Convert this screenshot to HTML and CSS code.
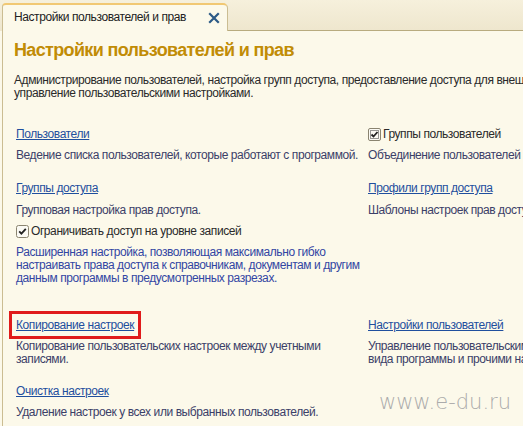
FILE: index.html
```html
<!DOCTYPE html>
<html lang="ru">
<head>
<meta charset="utf-8">
<link rel="stylesheet" href="styles.css">
</head>
<body>
<div class="window">
  <div class="tabbar">
    <div class="tab">
      <span class="tab-title">Настройки пользователей и прав</span>
      <svg class="close" width="12" height="12" viewBox="0 0 12 12"><path d="M2 2 L10 10 M10 2 L2 10" stroke="#2c5a86" stroke-width="2.2" stroke-linecap="square"/></svg>
    </div>
    <div class="tabfill"></div>
  </div>
  <div class="panel">
    <h1 class="title">Настройки пользователей и прав</h1>
    <p class="intro">Администрирование пользователей, настройка групп доступа, предоставление доступа для внешних пользователей,<br>управление пользовательскими настройками.</p>

    <div class="grid">
      <div class="cell r1">
        <a class="link" href="#">Пользователи</a>
        <p class="desc">Ведение списка пользователей, которые работают с программой.</p>
      </div>
      <div class="cell r1">
        <label class="check focus">
          <svg width="13" height="13" viewBox="0 0 13 13"><rect x="0.5" y="0.5" width="12" height="12" rx="1.5" fill="#fbfaf4" stroke="#8a8470"/><rect x="2.5" y="2.5" width="8" height="8" fill="none" stroke="#333" stroke-dasharray="1 1"/><path d="M3.5 6.5 L5.5 8.5 L9.5 4" fill="none" stroke="#222" stroke-width="1.8"/></svg>
          <span>Группы пользователей</span>
        </label>
        <p class="desc">Объединение пользователей в группы для удобства администрирования.</p>
      </div>

      <div class="cell r2">
        <a class="link" href="#">Группы доступа</a>
        <p class="desc">Групповая настройка прав доступа.</p>
        <label class="check">
          <svg width="13" height="13" viewBox="0 0 13 13"><rect x="0.5" y="0.5" width="12" height="12" rx="2" fill="#fbfaf4" stroke="#8a8470"/><path d="M3.2 6.4 L5.4 8.6 L9.8 3.8" fill="none" stroke="#222" stroke-width="1.8"/></svg>
          <span>Ограничивать доступ на уровне записей</span>
        </label>
        <p class="desc blue">Расширенная настройка, позволяющая максимально гибко<br>настраивать права доступа к справочникам, документам и другим<br>данным программы в предусмотренных разрезах.</p>
      </div>
      <div class="cell r2">
        <a class="link" href="#">Профили групп доступа</a>
        <p class="desc">Шаблоны настроек прав доступа для групп пользователей.</p>
      </div>

      <div class="cell r3">
        <a class="link boxed" href="#">Копирование настроек</a>
        <p class="desc">Копирование пользовательских настроек между учетными<br>записями.</p>
      </div>
      <div class="cell r3">
        <a class="link" href="#">Настройки пользователей</a>
        <p class="desc">Управление пользовательскими настройками отчетов, внешнего<br>вида программы и прочими настройками.</p>
      </div>

      <div class="cell r4">
        <a class="link" href="#">Очистка настроек</a>
        <p class="desc">Удаление настроек у всех или выбранных пользователей.</p>
      </div>
      <div class="cell r4"></div>
    </div>
  </div>
  <div class="watermark">www.e-du.ru</div>
</div>
</body>
</html>
```
FILE: styles.css
```css
* { box-sizing: border-box; }
html, body {
  margin: 0;
  padding: 0;
  width: 523px;
  height: 426px;
  overflow: hidden;
  background: #fcf9ea;
  font-family: "Liberation Sans", Arial, sans-serif;
  font-size: 12px;
  letter-spacing: -0.42px;
  color: #333;
}
.window {
  position: relative;
  width: 523px;
  height: 426px;
  overflow: hidden;
}
.tabbar {
  display: flex;
  align-items: flex-end;
  height: 31px;
  padding-left: 2px;
  background: linear-gradient(#f6f0dc, #eee6cd);
}
.tab {
  width: 226px;
  height: 28px;
  display: flex;
  align-items: center;
  justify-content: space-between;
  padding: 0 7px 2px 11px;
  background: #fcf9ea;
  border: 1px solid #cbbd92;
  border-top: 2px solid #f1c873;
  border-bottom: none;
  border-radius: 4px 5px 0 0;
}
.tab-title {
  color: #222;
  white-space: nowrap;
}
.close { display: block; margin-top: 1px; }
.tabfill {
  flex: 1;
  height: 1px;
  background: #b8ab7f;
}
.panel {
  margin-left: 2px;
  border-left: 1px solid #cbbd92;
  height: 395px;
  padding: 8px 0 0 11px;
}
.title {
  margin: 0;
  font-size: 18px;
  line-height: 22px;
  font-weight: bold;
  letter-spacing: -0.65px;
  color: #c18c06;
  white-space: nowrap;
}
.intro {
  margin: 13px 0 0 0;
  line-height: 13px;
  color: #2a2a2a;
  white-space: nowrap;
}
.grid {
  display: grid;
  grid-template-columns: 352px 1fr;
  margin-top: 27px;
  padding-left: 2px;
}
.cell { white-space: nowrap; }
.r1 { height: 54px; }
.r2 { height: 137px; }
.r3 { height: 66px; }
.link {
  display: inline-block;
  color: #1f4f9e;
  text-decoration: underline;
  line-height: 14px;
}
.link.boxed {
  outline: 3px solid #e01b1b;
  outline-offset: 4px;
}
.desc {
  margin: 8px 0 0 0;
  line-height: 13px;
  color: #3b4068;
}
.r2 .desc { margin-top: 9px; }
.r2 .desc.blue { color: #3346a3; margin-top: 8px; }
.check {
  display: flex;
  align-items: center;
  gap: 2px;
  color: #2a2a2a;
  line-height: 14px;
}
.check svg { display: block; }
.r2 .check { margin-top: 7px; }
.watermark {
  position: absolute;
  left: 379px;
  top: 390px;
  font-family: "DejaVu Sans", sans-serif;
  font-weight: 200;
  font-size: 21px;
  letter-spacing: 0;
  color: #ababab;
}
```
